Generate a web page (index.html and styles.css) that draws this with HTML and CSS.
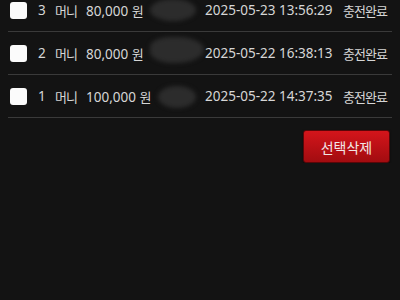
FILE: index.html
```html
<!DOCTYPE html>
<html lang="ko">
<head>
    <meta charset="UTF-8">
    <meta name="viewport" content="width=device-width, initial-scale=1.0">
    <title>충전내역</title>
    <link rel="stylesheet" href="styles.css">
</head>
<body>
    <div class="list">
        <div class="row">
            <span class="check"></span>
            <span class="num">3</span>
            <span class="kind">머니</span>
            <span class="amount">80,000 <em>원</em></span>
            <span class="name"><i class="blur b1"></i></span>
            <span class="date">2025-05-23 13:56:29</span>
            <span class="status">충전완료</span>
        </div>
        <div class="row">
            <span class="check"></span>
            <span class="num">2</span>
            <span class="kind">머니</span>
            <span class="amount">80,000 <em>원</em></span>
            <span class="name"><i class="blur b2"></i></span>
            <span class="date">2025-05-22 16:38:13</span>
            <span class="status">충전완료</span>
        </div>
        <div class="row">
            <span class="check"></span>
            <span class="num">1</span>
            <span class="kind">머니</span>
            <span class="amount">100,000 <em>원</em></span>
            <span class="name"><i class="blur b3"></i></span>
            <span class="date">2025-05-22 14:37:35</span>
            <span class="status">충전완료</span>
        </div>
    </div>
    <div class="actions">
        <button class="del-btn">선택삭제</button>
    </div>
</body>
</html>
```

FILE: styles.css
```css
body {
    margin: 0;
    background: #131313;
    color: #d6d6d6;
    font-family: "Noto Sans", "Noto Sans CJK KR", sans-serif;
    font-size: 13.5px;
    overflow: hidden;
}
.list {
    margin: -11px 8px 0 8px;
}
.row {
    display: flex;
    align-items: center;
    height: 42px;
    border-bottom: 1px solid #3a3a3a;
    white-space: nowrap;
}
.check {
    flex: none;
    width: 17px;
    height: 17px;
    margin-left: 2px;
    background: #fbfbfb;
    border-radius: 3px;
}
.num {
    flex: none;
    margin-left: 11px;
    width: 17px;
}
.kind, .status, .amount em {
    font-family: "Noto Sans CJK KR", sans-serif;
    font-size: 13px;
    font-style: normal;
    letter-spacing: -1px;
}
.kind {
    flex: none;
    width: 31px;
}
.amount {
    flex: none;
    width: 64px;
}
.name {
    position: relative;
    flex: none;
    width: 55px;
    height: 42px;
}
.blur {
    position: absolute;
    background: #2c2c2c;
    border-radius: 50%;
    filter: blur(2px);
}
.b1 {
    left: 0;
    top: 10px;
    width: 46px;
    height: 22px;
}
.b2 {
    left: 0;
    top: 5px;
    width: 54px;
    height: 26px;
    border-radius: 40% 50% 55% 45%;
}
.b3 {
    left: 8px;
    top: 11px;
    width: 38px;
    height: 22px;
}
.date {
    flex: none;
    width: 138px;
}
.actions {
    display: flex;
    justify-content: flex-end;
    padding: 12px 10px 0 0;
}
.del-btn {
    height: 33px;
    width: 87px;
    margin: 0;
    padding: 0;
    border: 1px solid #5a0608;
    border-radius: 3px;
    background: linear-gradient(#d4151b, #a20c10);
    color: #f2e6e6;
    font-family: "Noto Sans CJK KR", sans-serif;
    font-size: 14px;
    box-shadow: 0 1px 2px rgba(0, 0, 0, 0.6);
}
```
